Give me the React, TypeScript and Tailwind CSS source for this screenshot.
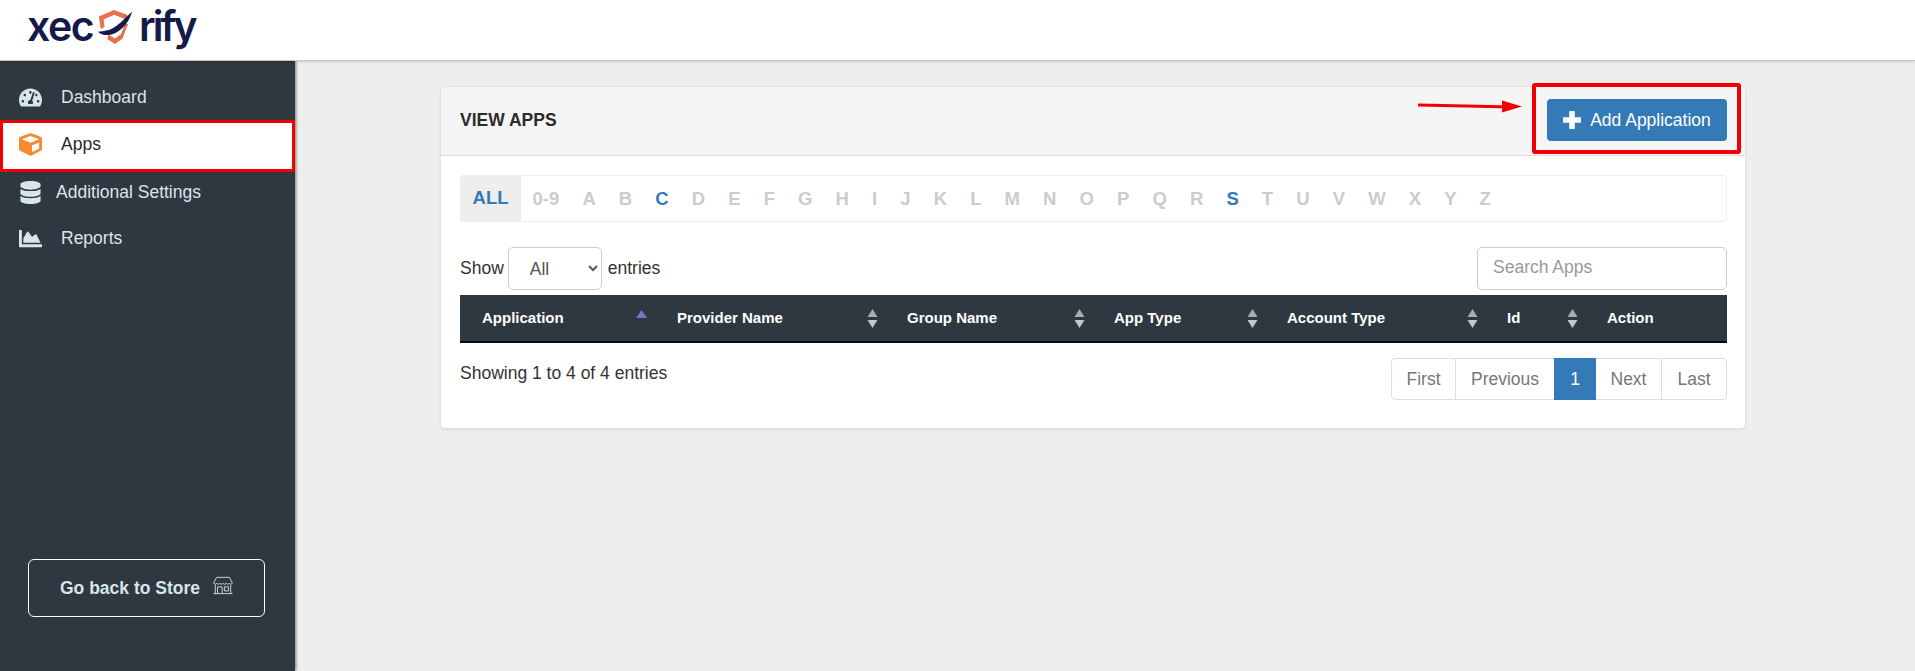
import React from "react";
import { FaTachometerAlt, FaCube, FaDatabase, FaChartArea } from "react-icons/fa";

const letters = ["0-9","A","B","C","D","E","F","G","H","I","J","K","L","M","N","O","P","Q","R","S","T","U","V","W","X","Y","Z"];
const active = new Set(["C","S"]);

const columns = [
  { label: "Application", w: "w-[195px]", sort: "first" },
  { label: "Provider Name", w: "w-[230px]", sort: "both" },
  { label: "Group Name", w: "w-[207px]", sort: "both" },
  { label: "App Type", w: "w-[173px]", sort: "both" },
  { label: "Account Type", w: "w-[220px]", sort: "both" },
  { label: "Id", w: "w-[100px]", sort: "both" },
  { label: "Action", w: "w-[142px]", sort: "none" },
];

function Logo() {
  return (
    <div className="flex items-center pl-[27px] pb-[8px] h-full text-[#161a4a] font-['Inter',sans-serif] font-semibold text-[41px] leading-[50px]">
      <span className="tracking-[-1.5px]">xec</span>
      <svg width="38" height="38" viewBox="0 0 40 40" className="mt-[2px] ml-[3px] mr-[5px] shrink-0">
        <path d="M3 9 L19 2 L33 7 L32 12 L19 7 L8 12 L9 20 L5 22 Z" fill="#e8704a" />
        <path d="M12 33 L20 38 L28 32 L32 21 L34 17 L31 16 L26 28 L20 32 L13 28 Z" fill="#e8704a" />
        <path d="M2 25 C8 24 13 24 18 21 C25 17 30 11 38 4 C35 14 29 22 21 26 C15 29 7 30 2 25 Z" fill="#161a4a" />
      </svg>
      <span className="tracking-[-3px]">rify</span>
    </div>
  );
}

function StoreIcon() {
  return (
    <svg width="20" height="19" viewBox="0 0 22 21" fill="none" stroke="#d6e6ea" strokeWidth="1" className="ml-[13px] mb-[5px]">
      <path d="M4 1.5 H18 L21 7 V8 C21 9.5 18.5 9.5 18 8 C17.5 9.5 15 9.5 14.5 8 C14 9.5 12 9.5 11 8 C10 9.5 8 9.5 7.5 8 C7 9.5 4.5 9.5 4 8 C3.5 9.5 1 9.5 1 8 V7 Z" />
      <path d="M2.5 10 V19.5 M19.5 10 V19.5 M0.5 19.5 H21.5" />
      <path d="M5 19.5 V12 H10 V19.5 M12.5 12 H17 V16.5 H12.5 Z" />
    </svg>
  );
}

function PlusIcon() {
  return (
    <svg width="18" height="18" viewBox="0 0 18 18" fill="#ffffff" className="shrink-0">
      <path d="M6.2 1 Q6.2 0 7.2 0 H10.8 Q11.8 0 11.8 1 V6.2 H17 Q18 6.2 18 7.2 V10.8 Q18 11.8 17 11.8 H11.8 V17 Q11.8 18 10.8 18 H7.2 Q6.2 18 6.2 17 V11.8 H1 Q0 11.8 0 10.8 V7.2 Q0 6.2 1 6.2 H6.2 Z" />
    </svg>
  );
}

function NavItem({ icon, label, textClass, rowClass }: { icon: React.ReactNode; label: string; textClass: string; rowClass: string }) {
  return (
    <div className={rowClass + " flex items-center pl-[18px] text-[#d6e6ea] text-[17.5px]"}>
      <span className="w-[24px] flex justify-center text-[23px]">{icon}</span>
      <span className={textClass}>{label}</span>
    </div>
  );
}

function SortIcon({ kind }: { kind: string }) {
  if (kind === "none") return null;
  if (kind === "first")
    return (
      <svg width="11" height="8" viewBox="0 0 11 8" className="self-start mt-[15px] mr-[8px]">
        <path d="M5.5 0 L11 8 H0 Z" fill="#7a70cf" />
      </svg>
    );
  return (
    <svg width="11" height="19" viewBox="0 0 11 19" className="mr-[7px]">
      <path d="M5.5 0 L10.5 8 H0.5 Z" fill="#a9acb1" />
      <path d="M0.5 11 H10.5 L5.5 19 Z" fill="#c4c6c9" />
    </svg>
  );
}

const pageCell = "h-full flex items-center justify-center border-[#ddd] text-[17.5px] text-[#777]";

export default function App() {
  return (
    <div className="h-screen w-full flex flex-col overflow-hidden bg-[#eeeeee] font-['Liberation_Sans',Arial,sans-serif] text-[#333]">
      <header className="h-[61px] shrink-0 bg-white border-b border-[#c8c8c8] shadow-[0_1px_2px_rgba(0,0,0,0.15)] relative z-10">
        <Logo />
      </header>
      <div className="flex-1 flex min-h-0">
        <aside className="w-[295px] shrink-0 bg-[#2f3740] flex flex-col justify-between pt-[13px] pb-[54px] shadow-[1px_0_3px_rgba(0,0,0,0.5)]">
          <nav>
            <NavItem icon={<FaTachometerAlt />} label="Dashboard" textClass="ml-[19px]" rowClass="h-[46px]" />
            <div className="flex items-center h-[52px] mb-[-3px] pl-[15px] pb-[3px] bg-white border-[3px] border-[#f00000] text-[#1d2733] text-[17.5px] font-medium">
              <span className="w-[24px] flex justify-center text-[23px] text-[#f58a2e]"><FaCube /></span>
              <span className="ml-[19px]">Apps</span>
            </div>
            <NavItem icon={<FaDatabase />} label="Additional Settings" textClass="ml-[14px]" rowClass="h-[47px]" />
            <NavItem icon={<FaChartArea />} label="Reports" textClass="ml-[19px]" rowClass="h-[46px] pb-[2px]" />
          </nav>
          <div className="mx-[28px] h-[58px] w-[237px] flex items-center justify-center border border-white rounded-[6px] text-[#d6e6ea] font-bold text-[17.5px]">
            Go back to Store
            <StoreIcon />
          </div>
        </aside>
        <main className="flex-1 min-w-0 pl-[145px] pt-[25px]">
          <section className="w-[1306px] h-[343px] bg-white rounded-[5px] border border-[#e3e3e3] shadow-[0_1px_2px_rgba(0,0,0,0.08)] relative">
            <div className="h-[69px] bg-[#f5f5f5] border-b border-[#dddddd] rounded-t-[5px] flex items-center justify-between pl-[19px] pr-[18px] pb-[2px]">
              <h2 className="text-[17.5px] font-bold text-[#2b2b2b]">VIEW APPS</h2>
              <button className="w-[180px] h-[42px] bg-[#337ab7] rounded-[4px] text-white text-[17.5px] flex items-center justify-center gap-[9px]">
                <PlusIcon />
                Add Application
              </button>
            </div>
            <svg width="114" height="14" viewBox="0 0 114 14" className="absolute left-[977px] top-[13px]">
              <path d="M1 5 L94 7" stroke="#f00000" strokeWidth="3" strokeLinecap="round" />
              <path d="M84 0.5 L104 6.5 L84 12.5 Z" fill="#f00000" />
            </svg>
            <div className="absolute left-[1091px] top-[-4px] w-[209px] h-[71px] border-[4px] border-[#f00000] rounded-[3px]" />

            <div className="pl-[19px] pr-[18px] pt-[19px]">
              <div className="h-[47px] border border-[#eeeeee] rounded-[4px] flex items-center text-[18.5px] font-bold text-[#cccccc]">
                <span className="h-[47px] w-[61px] bg-[#eeeeee] rounded-l-[4px] flex items-center justify-center text-[#337ab7] mt-[-1px] ml-[-1px]">ALL</span>
                {letters.map((l) => (
                  <span key={l} className={"px-[11.55px] " + (active.has(l) ? "text-[#337ab7]" : "")}>{l}</span>
                ))}
              </div>
              <div className="flex items-center justify-between h-[43px] mt-[25px] text-[17.5px]">
                <div className="flex items-center">
                  <span>Show</span>
                  <select defaultValue="All" className="w-[94px] h-[43px] ml-[4px] mr-[6px] pl-[17px] bg-white border border-[#cccccc] rounded-[5px] text-[17.5px] text-[#555]">
                    <option>All</option>
                  </select>
                  <span>entries</span>
                </div>
                <input placeholder="Search Apps" className="w-[250px] h-[43px] px-[15px] pb-[2px] border border-[#cccccc] rounded-[5px] text-[17.5px] placeholder:text-[#999] bg-white" />
              </div>
              <table className="mt-[5px] w-full table-fixed border-separate border-spacing-0">
                <thead>
                  <tr className="text-white">
                    {columns.map((c) => (
                      <th key={c.label} className={c.w + " h-[48px] p-0 bg-[#2f3740] border-b-2 border-[#0b0b0b] font-bold text-[15px] text-left"}>
                        <div className="h-[46px] flex items-center justify-between pl-[22px]">
                          <span>{c.label}</span>
                          <SortIcon kind={c.sort} />
                        </div>
                      </th>
                    ))}
                  </tr>
                </thead>
              </table>
              <div className="flex items-start justify-between mt-[15px]">
                <span className="text-[17.5px] mt-[2px]">Showing 1 to 4 of 4 entries</span>
                <div className="flex h-[42px] border border-[#dddddd] rounded-[4px] bg-white">
                  <span className={pageCell + " w-[64px] border-r"}>First</span>
                  <span className={pageCell + " w-[98px]"}>Previous</span>
                  <span className="h-[42px] mt-[-1px] w-[42px] flex items-center justify-center bg-[#337ab7] text-white text-[17.5px]">1</span>
                  <span className={pageCell + " w-[66px] border-r"}>Next</span>
                  <span className={pageCell + " w-[64px]"}>Last</span>
                </div>
              </div>
            </div>
          </section>
        </main>
      </div>
    </div>
  );
}
